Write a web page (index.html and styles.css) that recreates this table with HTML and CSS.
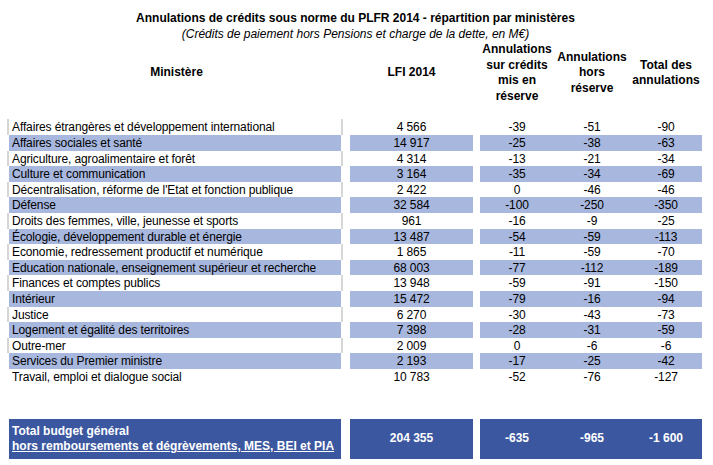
FILE: index.html
```html
<!DOCTYPE html>
<html lang="fr">
<head>
<meta charset="utf-8">
<title>Annulations de crédits</title>
<link rel="stylesheet" href="styles.css">
</head>
<body>
<div class="sheet">
  <div class="title">Annulations de crédits sous norme du PLFR 2014 - répartition par ministères</div>
  <div class="subtitle">(Crédits de paiement hors Pensions et charge de la dette, en M€)</div>

  <div class="row head">
    <div class="c name">Ministère</div>
    <div class="gap"></div>
    <div class="c">LFI 2014</div>
    <div class="gap"></div>
    <div class="c">Annulations<br>sur crédits<br>mis en<br>réserve</div>
    <div class="c">Annulations<br>hors<br>réserve</div>
    <div class="c">Total des<br>annulations</div>
  </div>

  <div class="spacer"></div>

  <div class="body">
    <div class="row plain"><div class="name">Affaires étrangères et développement international</div><div class="gap"></div><div class="c">4 566</div><div class="gap"></div><div class="c">-39</div><div class="c">-51</div><div class="c">-90</div></div>
    <div class="row band"><div class="name">Affaires sociales et santé</div><div class="gap"></div><div class="c">14 917</div><div class="gap"></div><div class="c">-25</div><div class="c">-38</div><div class="c">-63</div></div>
    <div class="row plain"><div class="name">Agriculture, agroalimentaire et forêt</div><div class="gap"></div><div class="c">4 314</div><div class="gap"></div><div class="c">-13</div><div class="c">-21</div><div class="c">-34</div></div>
    <div class="row band"><div class="name">Culture et communication</div><div class="gap"></div><div class="c">3 164</div><div class="gap"></div><div class="c">-35</div><div class="c">-34</div><div class="c">-69</div></div>
    <div class="row plain"><div class="name">Décentralisation, réforme de l'Etat et fonction publique</div><div class="gap"></div><div class="c">2 422</div><div class="gap"></div><div class="c">0</div><div class="c">-46</div><div class="c">-46</div></div>
    <div class="row band"><div class="name">Défense</div><div class="gap"></div><div class="c">32 584</div><div class="gap"></div><div class="c">-100</div><div class="c">-250</div><div class="c">-350</div></div>
    <div class="row plain"><div class="name">Droits des femmes, ville, jeunesse et sports</div><div class="gap"></div><div class="c">961</div><div class="gap"></div><div class="c">-16</div><div class="c">-9</div><div class="c">-25</div></div>
    <div class="row band"><div class="name">Écologie, développement durable et énergie</div><div class="gap"></div><div class="c">13 487</div><div class="gap"></div><div class="c">-54</div><div class="c">-59</div><div class="c">-113</div></div>
    <div class="row plain"><div class="name">Economie, redressement productif et numérique</div><div class="gap"></div><div class="c">1 865</div><div class="gap"></div><div class="c">-11</div><div class="c">-59</div><div class="c">-70</div></div>
    <div class="row band"><div class="name">Education nationale, enseignement supérieur et recherche</div><div class="gap"></div><div class="c">68 003</div><div class="gap"></div><div class="c">-77</div><div class="c">-112</div><div class="c">-189</div></div>
    <div class="row plain"><div class="name">Finances et comptes publics</div><div class="gap"></div><div class="c">13 948</div><div class="gap"></div><div class="c">-59</div><div class="c">-91</div><div class="c">-150</div></div>
    <div class="row band"><div class="name">Intérieur</div><div class="gap"></div><div class="c">15 472</div><div class="gap"></div><div class="c">-79</div><div class="c">-16</div><div class="c">-94</div></div>
    <div class="row plain"><div class="name">Justice</div><div class="gap"></div><div class="c">6 270</div><div class="gap"></div><div class="c">-30</div><div class="c">-43</div><div class="c">-73</div></div>
    <div class="row band"><div class="name">Logement et égalité des territoires</div><div class="gap"></div><div class="c">7 398</div><div class="gap"></div><div class="c">-28</div><div class="c">-31</div><div class="c">-59</div></div>
    <div class="row plain"><div class="name">Outre-mer</div><div class="gap"></div><div class="c">2 009</div><div class="gap"></div><div class="c">0</div><div class="c">-6</div><div class="c">-6</div></div>
    <div class="row band"><div class="name">Services du Premier ministre</div><div class="gap"></div><div class="c">2 193</div><div class="gap"></div><div class="c">-17</div><div class="c">-25</div><div class="c">-42</div></div>
    <div class="row last"><div class="name">Travail, emploi et dialogue social</div><div class="gap"></div><div class="c">10 783</div><div class="gap"></div><div class="c">-52</div><div class="c">-76</div><div class="c">-127</div></div>
  </div>

  <div class="row total">
    <div class="name">Total budget général<br><span class="u">hors remboursements et dégrèvements, MES, BEI et PIA</span></div>
    <div class="gap"></div>
    <div class="c">204 355</div>
    <div class="gap"></div>
    <div class="c">-635</div>
    <div class="c">-965</div>
    <div class="c">-1 600</div>
  </div>
</div>
</body>
</html>
```

FILE: styles.css
```css
html, body {
  margin: 0;
  padding: 0;
  background: #ffffff;
}

.sheet {
  width: 693px;
  padding: 10px 0 0 9px;
  font-family: "Liberation Sans", Arial, sans-serif;
  font-size: 12px;
  color: #000000;
}

.title {
  font-weight: bold;
  text-align: center;
  line-height: 16px;
  height: 16px;
}

.subtitle {
  font-style: italic;
  text-align: center;
  line-height: 16px;
  height: 16px;
}

.row {
  display: grid;
  grid-template-columns: 332px 9px 123px 7px 74px 76px 72px;
}

.head {
  height: 62px;
  font-weight: bold;
  line-height: 15.5px;
  align-items: center;
}

.head .c {
  text-align: center;
}

.spacer {
  height: 15.4px;
}

.body .row {
  height: 15.6px;
  line-height: 15.6px;
  letter-spacing: -0.12px;
}

.body .row > div {
  box-sizing: border-box;
  padding-top: 1px;
  height: 15.6px;
  overflow: visible;
}

.name {
  padding-left: 3px;
  white-space: nowrap;
}

.c {
  text-align: center;
  white-space: nowrap;
}

.band .name,
.band .c {
  background: #a7b7de;
}

.plain .name {
  box-shadow: -2px 0 0 #d6d6d6, 2px 0 0 #d6d6d6;
}

.total {
  margin-top: 34.4px;
  height: 40px;
  align-items: center;
  font-weight: bold;
  color: #ffffff;
  line-height: 15px;
}

.total .name,
.total .c {
  background: #3b579f;
  height: 40px;
  display: flex;
  flex-direction: column;
  justify-content: center;
}

.total .c {
  align-items: center;
}

.u {
  text-decoration: underline;
}
```
